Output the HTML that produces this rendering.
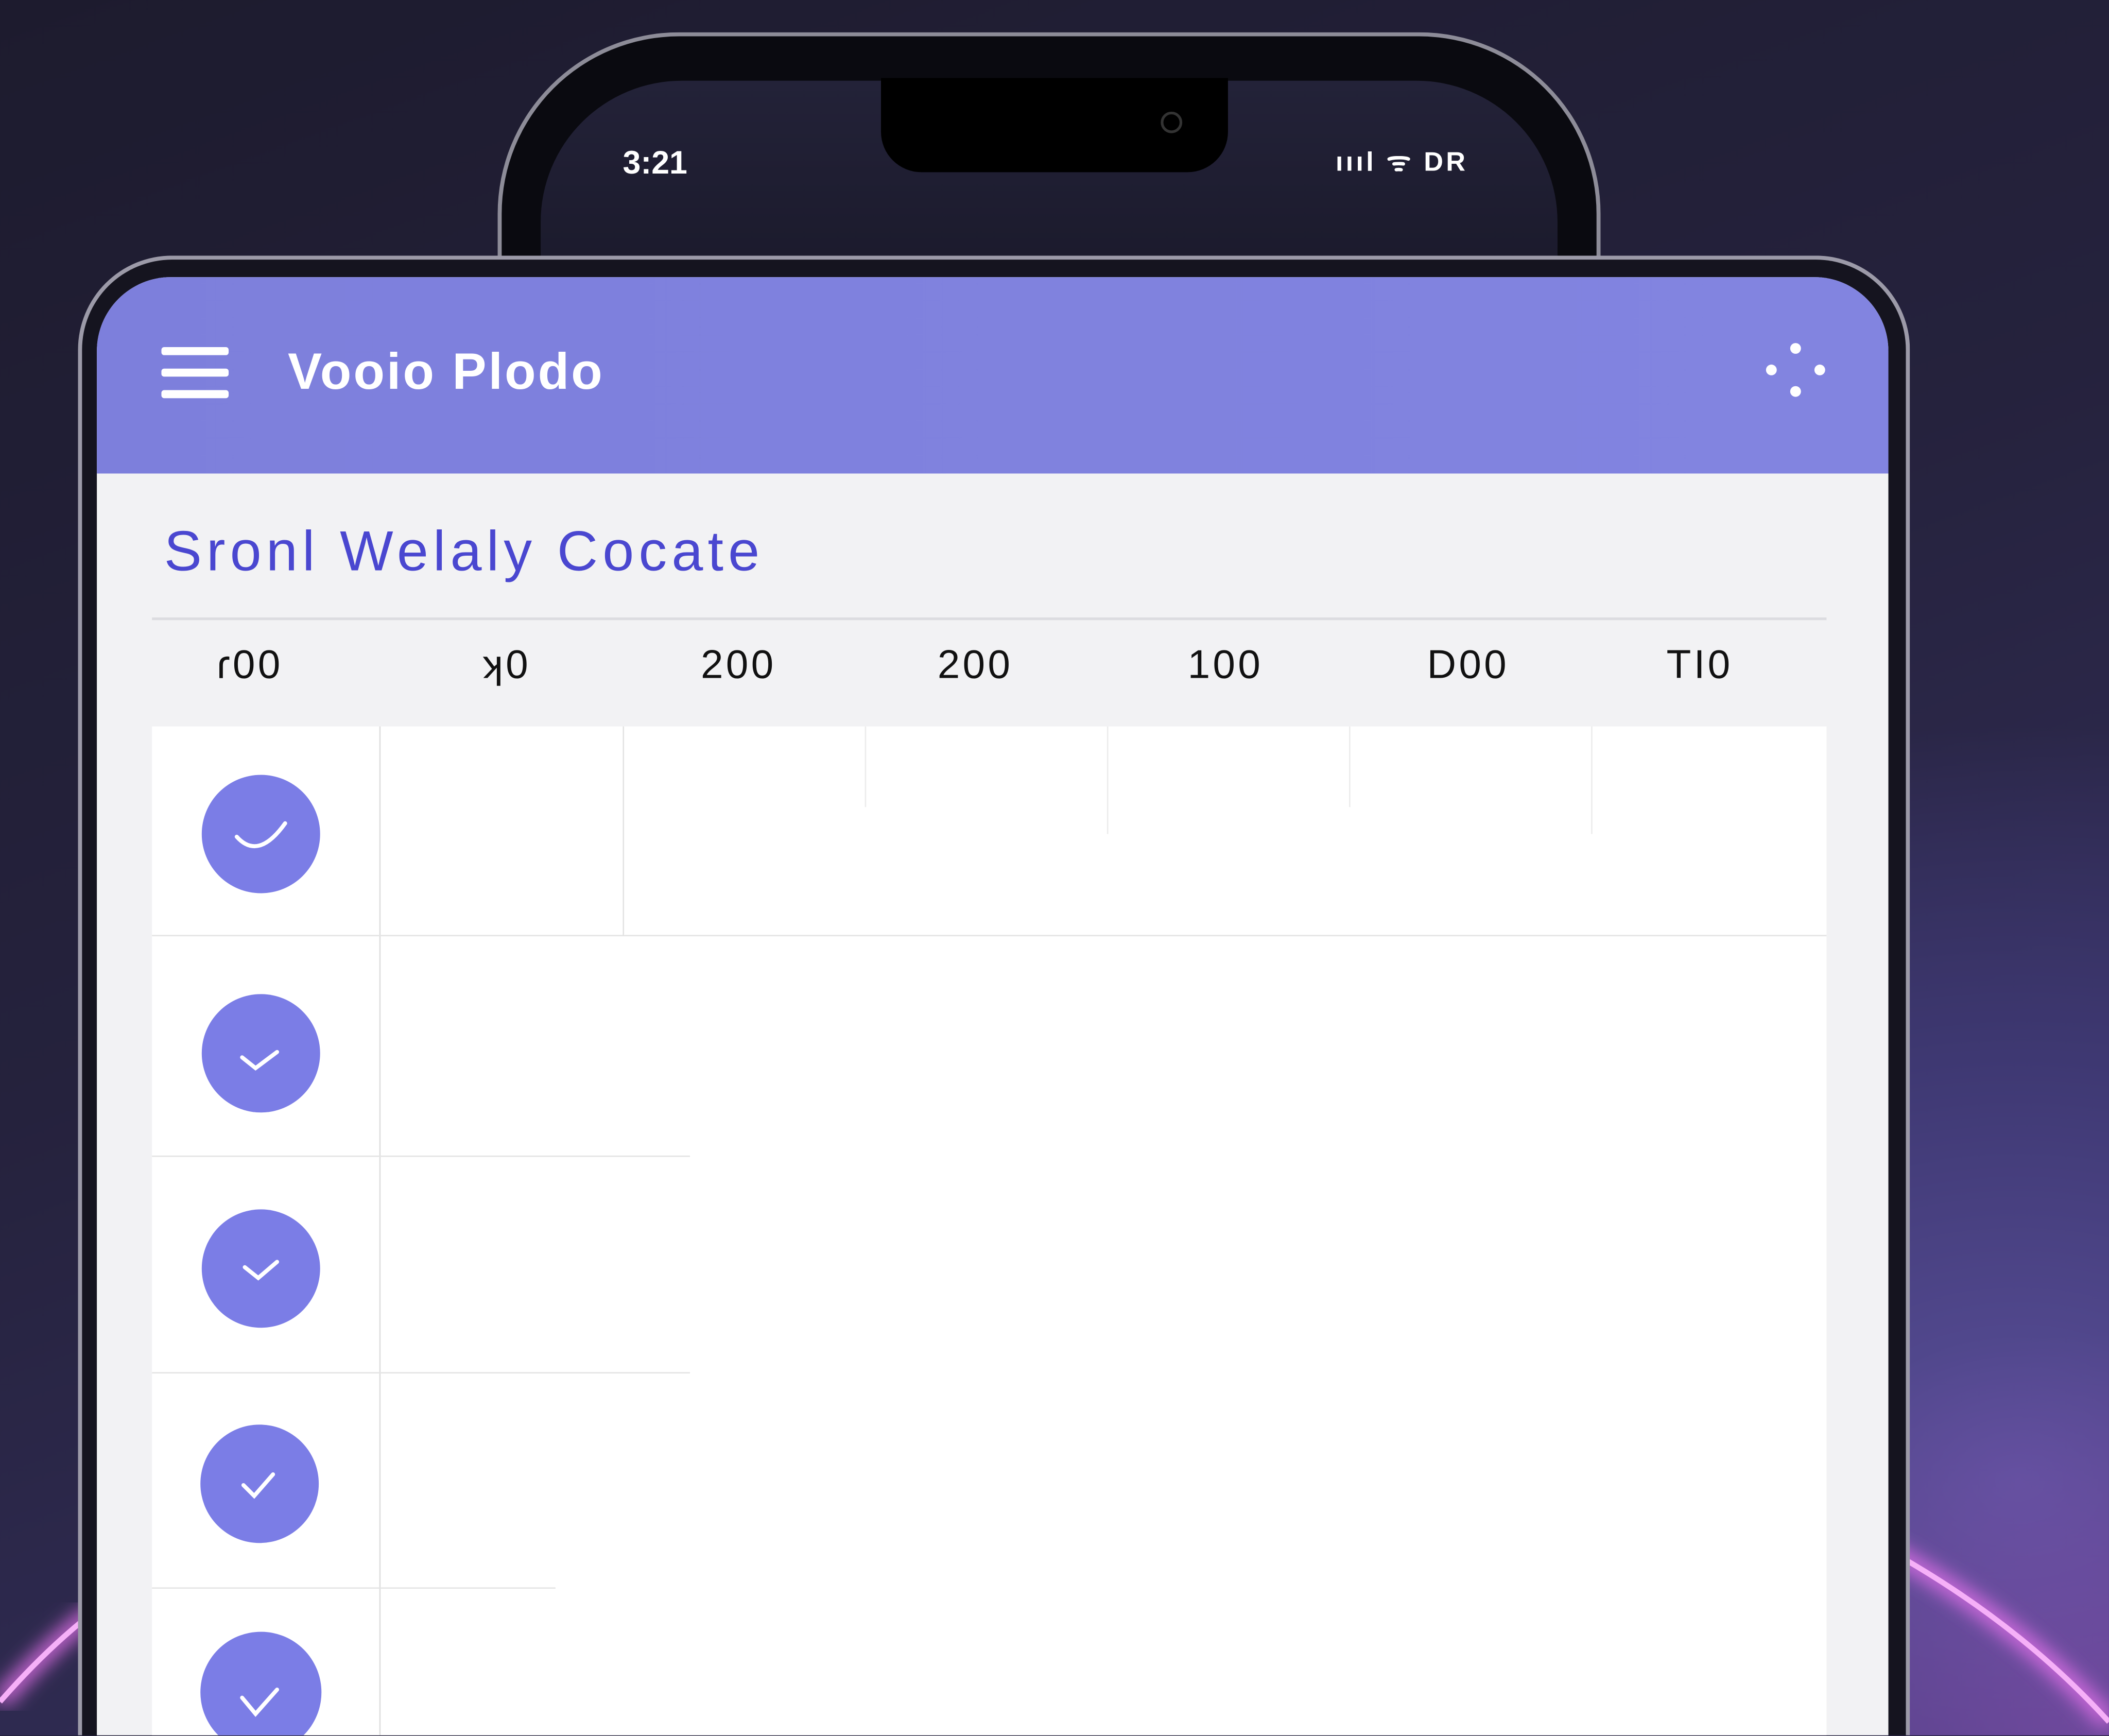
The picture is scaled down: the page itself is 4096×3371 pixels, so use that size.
<!DOCTYPE html>
<html><head><meta charset="utf-8"><style>
html,body{margin:0;padding:0;width:4096px;height:3371px;overflow:hidden;background:#221f38}
#s{position:absolute;left:0;top:0;width:1568px;height:1290px;transform:scale(2.6122);transform-origin:0 0;overflow:hidden;font-family:"Liberation Sans",sans-serif;
background:radial-gradient(ellipse 900px 700px at 1500px 1100px,#5a4f9a 0%,#3e3872 45%,transparent 80%),linear-gradient(160deg,#1d1b2e 0%,#25223d 45%,#3a3468 100%)}
.a{position:absolute}
</style></head><body><div id="s">
<div class="a" style="left:0;top:900px;width:1568px;height:390px;background:radial-gradient(ellipse 300px 250px at 0 1290px,rgba(200,90,220,0.35),transparent),radial-gradient(ellipse 400px 300px at 1568px 390px,rgba(200,90,220,0.3),transparent)"></div>
<svg class="a" style="left:0;top:0" width="1568" height="1290">
<defs><filter id="g"><feGaussianBlur stdDeviation="7"/></filter></defs>
<path d="M0,1265 Q35,1225 70,1198" stroke="#e070e8" stroke-width="12" fill="none" filter="url(#g)"/>
<path d="M0,1265 Q35,1225 70,1198" stroke="#f6b0f8" stroke-width="4" fill="none"/>
<path d="M1400,1150 Q1500,1205 1568,1280" stroke="#e070e8" stroke-width="12" fill="none" filter="url(#g)"/>
<path d="M1400,1150 Q1500,1205 1568,1280" stroke="#f6b0f8" stroke-width="4" fill="none"/>
</svg>
<div class="a" style="left:370px;top:24px;width:820px;height:200px;border-radius:135px 135px 0 0;background:#0a0a10;border:3px solid #8d8c98;border-bottom:none;box-sizing:border-box"></div>
<div class="a" style="left:402px;top:60px;width:756px;height:140px;border-radius:105px 105px 0 0;background:linear-gradient(180deg,#232238,#1b1a2c)"></div>
<div class="a" style="left:655px;top:58px;width:258px;height:70px;border-radius:0 0 30px 30px;background:#000"></div>
<div class="a" style="left:863px;top:83px;width:16px;height:16px;border-radius:50%;border:2px solid #333;box-sizing:border-box"></div>
<div class="a" style="left:463px;top:108px;color:#fff;font-weight:bold;font-size:24px">3:21</div>
<div class="a" style="left:993px;top:106px;color:#fff;font-weight:bold;font-size:20px;letter-spacing:2px">ıııl ᯤ DR</div>
<div class="a" style="left:58px;top:190px;width:1362px;height:1100px;border-radius:70px 70px 0 0;border:3px solid #9c9aa8;border-bottom:none;box-sizing:border-box;background:#15141f"></div>
<div class="a" style="left:72px;top:206px;width:1332px;height:1084px;border-radius:55px 55px 0 0;background:#f2f2f4;overflow:hidden">
 <div class="a" style="left:0;top:0;width:1332px;height:146px;background:linear-gradient(90deg,#7d7fdc,#8284e0)"></div>
</div>
<div class="a" style="left:120px;top:258px;width:50px;height:6px;background:#fff;border-radius:2px"></div>
<div class="a" style="left:120px;top:274px;width:50px;height:6px;background:#fff;border-radius:2px"></div>
<div class="a" style="left:120px;top:290px;width:50px;height:6px;background:#fff;border-radius:2px"></div>
<div class="a" style="left:214px;top:256px;color:#fff;font-weight:bold;font-size:38px;letter-spacing:1.5px">Vooio Plodo</div>
<svg class="a" style="left:1310px;top:252px" width="50" height="46"><g fill="#fff"><circle cx="25" cy="7" r="4"/><circle cx="7" cy="23" r="4"/><circle cx="43" cy="23" r="4"/><circle cx="25" cy="39" r="4"/></g></svg>
<div class="a" style="left:122px;top:386px;color:#4a47d0;font-size:42px;letter-spacing:3.5px">Sronl Welaly Cocate</div>
<div class="a" style="left:113px;top:459px;width:1245px;height:2px;background:#dcdce0"></div>
<div class="a" style="left:113px;top:478px;width:1245px;color:#111;font-size:30px;letter-spacing:2px">
<span class="a" style="left:48px">ɾ00</span><span class="a" style="left:246px">ʞ0</span><span class="a" style="left:408px">200</span><span class="a" style="left:584px">200</span><span class="a" style="left:770px">100</span><span class="a" style="left:948px">D00</span><span class="a" style="left:1126px">TI0</span></div>
<div class="a" style="left:113px;top:540px;width:1245px;height:750px;background:#fff"></div>
<div class="a" style="left:282px;top:540px;width:1px;height:750px;background:#dedede"></div>
<div class="a" style="left:463px;top:540px;width:1px;height:155px;background:#e2e2e2"></div>
<div class="a" style="left:643px;top:540px;width:1px;height:60px;background:#ececec"></div>
<div class="a" style="left:823px;top:540px;width:1px;height:80px;background:#ececec"></div>
<div class="a" style="left:1003px;top:540px;width:1px;height:60px;background:#ececec"></div>
<div class="a" style="left:1183px;top:540px;width:1px;height:80px;background:#ececec"></div>
<div class="a" style="left:113px;top:695px;width:1245px;height:1px;background:#e4e4e4"></div>
<div class="a" style="left:113px;top:859px;width:400px;height:1px;background:#e4e4e4"></div>
<div class="a" style="left:113px;top:1020px;width:400px;height:1px;background:#e4e4e4"></div>
<div class="a" style="left:113px;top:1180px;width:300px;height:1px;background:#e4e4e4"></div>
<svg class="a" style="left:0;top:0" width="1568" height="1290">
<g fill="#7b7de6" stroke="#fff" stroke-width="3" stroke-linecap="round">
<circle cx="194" cy="620" r="44" stroke="none"/><path d="M176,622 Q192,640 212,612" fill="none"/>
<circle cx="194" cy="783" r="44" stroke="none"/><path d="M180,786 l10,8 l16,-12" fill="none"/>
<circle cx="194" cy="943" r="44" stroke="none"/><path d="M182,942 l10,8 l14,-12" fill="none"/>
<circle cx="193" cy="1103" r="44" stroke="none"/><path d="M181,1104 l8,8 l14,-16" fill="none"/>
<circle cx="194" cy="1258" r="45" stroke="none"/><path d="M180,1262 l10,12 l16,-18" fill="none"/>
</g></svg>
</div></body></html>
